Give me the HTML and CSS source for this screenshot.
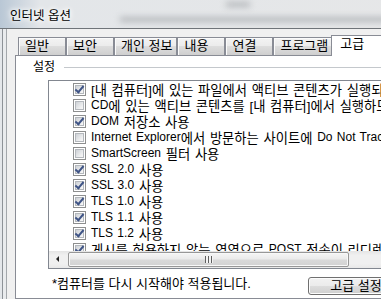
FILE: index.html
```html
<!DOCTYPE html>
<html lang="ko">
<head>
    <meta charset="UTF-8">
    <title>인터넷 옵션</title>
    <link rel="stylesheet" href="styles.css">
</head>
<body>
    <div class="window">
        <div class="titlebar">
            <span class="title">인터넷 옵션</span>
            <span class="haze haze-a"></span>
            <span class="haze haze-b"></span>
        </div>
        <div class="main">
            <div class="frame"></div>
            <div class="client">
                <div class="tabs">
                    <div class="tab">일반</div>
                    <div class="tab">보안</div>
                    <div class="tab">개인 정보</div>
                    <div class="tab">내용</div>
                    <div class="tab">연결</div>
                    <div class="tab">프로그램</div>
                    <div class="tab active">고급</div>
                </div>
                <div class="panel">
                    <div class="group-head"><span>설정</span></div>
                    <div class="listbox">
                        <!-- latin runs get their own size, the hangul is set larger -->
                        <ul class="options">
                            <li class="option"><span class="check on"></span>[내 컴퓨터]에 있는 파일에서 액티브 콘텐츠가 실행되도록 허용*</li>
                            <li class="option"><span class="check"></span><span class="en">CD</span>에 있는 액티브 콘텐츠를 [내 컴퓨터]에서 실행하도록 허용*</li>
                            <li class="option"><span class="check on"></span><span class="en">DOM</span> 저장소 사용</li>
                            <li class="option"><span class="check"></span><span class="en">Internet Explorer</span>에서 방문하는 사이트에 <span class="en">Do Not Track</span> 요청 보내기</li>
                            <li class="option"><span class="check"></span><span class="en">SmartScreen</span> 필터 사용</li>
                            <li class="option"><span class="check on"></span><span class="en">SSL 2.0</span> 사용</li>
                            <li class="option"><span class="check on"></span><span class="en">SSL 3.0</span> 사용</li>
                            <li class="option"><span class="check on"></span><span class="en">TLS 1.0</span> 사용</li>
                            <li class="option"><span class="check on"></span><span class="en">TLS 1.1</span> 사용</li>
                            <li class="option"><span class="check on"></span><span class="en">TLS 1.2</span> 사용</li>
                            <li class="option"><span class="check on"></span>게시를 허용하지 않는 영역으로 <span class="en">POST</span> 전송이 리디렉션되는 경우 경고</li>
                        </ul>
                        <div class="hscroll">
                            <span class="arrow"></span>
                            <span class="thumb"><span class="grip"></span></span>
                        </div>
                    </div>
                    <div class="footer">
                        <span class="note">*컴퓨터를 다시 시작해야 적용됩니다.</span>
                        <button class="btn">고급 설정</button>
                    </div>
                </div>
            </div>
        </div>
    </div>
</body>
</html>
```

FILE: styles.css
```css
html, body {
    margin: 0;
}
body {
    width: 381px;
    height: 299px;
    overflow: hidden;
    font-family: 'Liberation Sans', 'Noto Sans CJK KR', sans-serif;
    font-size: 12px;
    color: #000;
    background: #f0f0f0;
}
.window {
    width: 430px;
    height: 299px;
    display: flex;
    flex-direction: column;
}
.titlebar {
    position: relative;
    height: 28px;
    padding-left: 10px;
    display: flex;
    align-items: center;
    overflow: hidden;
    border-bottom: 1px solid #6f7479;
    background: linear-gradient(to right, #b9c7d5, #e3e6e9 40px, #e6e7e8);
}
.title {
    position: relative;
    z-index: 1;
    font-size: 12.5px;
    text-shadow: 0 0 4px #fff, 0 0 6px #fff, 0 0 8px #fff;
}
.haze {
    position: absolute;
    background: #b4b7ba;
    filter: blur(3px);
}
.haze-a {
    left: 120px;
    right: 0;
    top: 17px;
    height: 5px;
}
.haze-b {
    left: 226px;
    width: 24px;
    top: 2px;
    height: 5px;
}
.main {
    flex: 1;
    display: flex;
    min-height: 0;
}
.frame {
    width: 7px;
    background: linear-gradient(to right, #e4e7ea 0 2px, #8d9297 2px 3px, #e9ebed 3px 6px, #a3a7ab 6px 7px);
}
.client {
    flex: 1;
    display: flex;
    flex-direction: column;
    padding: 6px 0 0 8px;
    background: #f0f0f0;
}
.tabs {
    position: relative;
    z-index: 1;
    display: flex;
    align-items: flex-end;
    height: 20px;
    padding-left: 3px;
    font-size: 13px;
}
.tab {
    box-sizing: border-box;
    height: 18px;
    min-width: 48px;
    padding: 0 4px 0 6px;
    line-height: 16px;
    white-space: nowrap;
    border: 1px solid #898c95;
    border-bottom: none;
    background: linear-gradient(#f3f3f3, #ebebeb 50%, #dddddd 50%, #cfcfcf);
    box-shadow: inset 1px 1px 0 #fbfbfb;
}
.tab.active {
    height: 21px;
    margin: 0 0 -1px -2px;
    padding: 0 8px;
    min-width: 54px;
    background: #fff;
    box-shadow: none;
}
.panel {
    box-sizing: border-box;
    width: 410px;
    flex: 1;
    background: #fff;
    border: 1px solid #898c95;
}
.group-head {
    display: flex;
    align-items: center;
    height: 12px;
    margin: 5px 0 0 17px;
    line-height: 12px;
}
.group-head::after {
    content: '';
    flex: 1;
    margin-left: 9px;
    border-top: 1px solid #c4c8cc;
}
.listbox {
    box-sizing: border-box;
    height: 189px;
    margin: 7px 0 0 32px;
    border: 1px solid #828790;
}
.options {
    list-style: none;
    margin: 0;
    padding: 0;
    height: 170px;
    overflow: hidden;
    font-size: 13.3px;
    word-spacing: 1px;
}
.option {
    display: flex;
    align-items: center;
    height: 16px;
    padding-left: 24px;
    white-space: pre;
}
.en {
    font-size: 12px;
}
.check {
    position: relative;
    flex: none;
    box-sizing: border-box;
    width: 13px;
    height: 13px;
    margin-right: 5px;
    padding: 1px;
    border: 1px solid #8e8f8f;
    background: #fff;
}
.check::before {
    content: '';
    display: block;
    box-sizing: border-box;
    width: 9px;
    height: 9px;
    border: 1px solid #b4b8bd;
    background: linear-gradient(135deg, #cdd1d6, #eeeff0 70%, #f7f7f7);
}
.check.on::after {
    content: '';
    position: absolute;
    left: 3px;
    top: 0px;
    width: 3px;
    height: 7px;
    border-right: 2px solid #3f5486;
    border-bottom: 2px solid #3f5486;
    transform: rotate(40deg);
}
.hscroll {
    display: flex;
    height: 17px;
    background: linear-gradient(#e4e4e4, #f0f0f0 25%, #f0f0f0 75%, #e8e8e8);
}
.arrow {
    position: relative;
    width: 17px;
}
.arrow::before {
    content: '';
    position: absolute;
    left: 7px;
    top: 5px;
    border: 3px solid transparent;
    border-left: none;
    border-right: 3px solid #222;
    border-top-width: 3.5px;
    border-bottom-width: 3.5px;
}
.thumb {
    box-sizing: border-box;
    display: flex;
    justify-content: center;
    align-items: center;
    width: 281px;
    margin: 1px 0 1px 2px;
    border: 1px solid #979797;
    border-radius: 2px;
    background: linear-gradient(#f5f5f5, #ebebeb 45%, #d9d9d9 55%, #d2d2d2);
    box-shadow: inset 0 0 0 1px #f8f8f8;
}
.grip {
    width: 8px;
    height: 7px;
    background: repeating-linear-gradient(to right, #5f5f5f 0 1px, #f4f4f4 1px 3px);
}
.footer {
    display: flex;
    align-items: flex-start;
    margin-top: 8px;
    padding: 0 20px 0 36px;
}
.note {
    font-size: 13px;
    line-height: 14px;
}
.btn {
    box-sizing: border-box;
    width: 96px;
    height: 18px;
    margin-left: auto;
    padding: 0;
    font: inherit;
    font-size: 13px;
    line-height: 14px;
    color: #000;
    border: 1px solid #707070;
    border-radius: 3px;
    background: linear-gradient(#f2f2f2, #ebebeb 50%, #dddddd 50%, #cfcfcf);
    box-shadow: inset 0 0 0 1px #fcfcfc;
}
```
